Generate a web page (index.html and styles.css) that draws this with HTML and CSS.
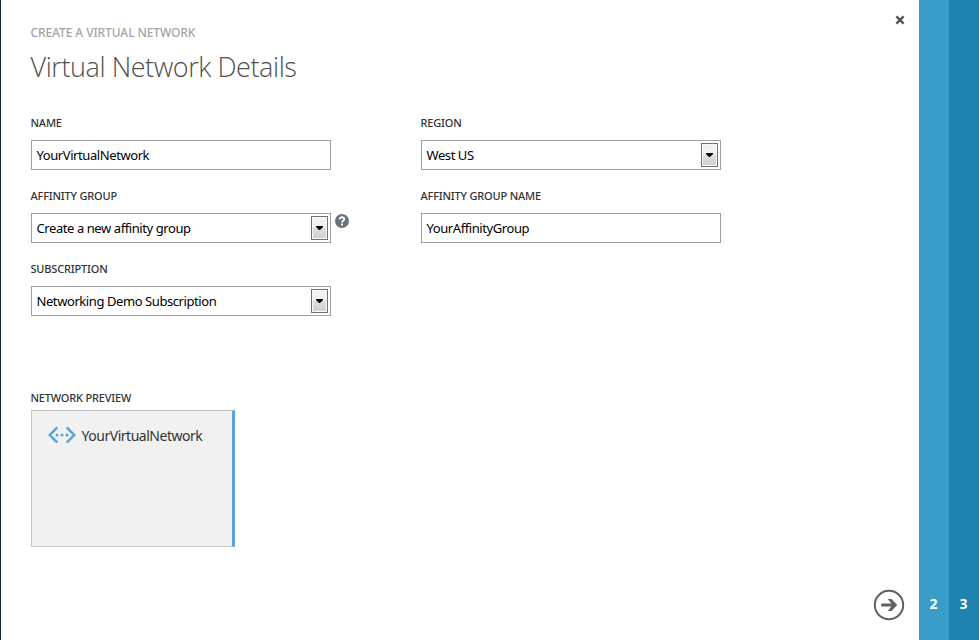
FILE: index.html
```html
<!DOCTYPE html>
<html lang="en">
<head>
<meta charset="utf-8">
<title>Create a Virtual Network</title>
<link rel="stylesheet" href="styles.css">
</head>
<body>
<div class="wizard">
  <main class="page">
    <button class="close" aria-label="Close"><svg width="10" height="10" viewBox="0 0 10 10"><path d="M1.4 1.4 8.6 8.6M8.6 1.4 1.4 8.6"/></svg></button>
    <p class="eyebrow">CREATE A VIRTUAL NETWORK</p>
    <h1 class="title">Virtual Network Details</h1>
    <div class="columns">
      <div class="column">
        <div class="field"><span class="label">NAME</span><div class="box"><span class="value">YourVirtualNetwork</span></div></div>
        <div class="field"><span class="label">AFFINITY GROUP</span>
          <div class="with-help">
            <div class="box"><span class="value">Create a new affinity group</span><span class="drop"><svg width="7" height="4" viewBox="0 0 7 4"><path d="M0 0H7V1L4 4H3L0 1Z"/></svg></span></div>
            <svg class="help" width="14" height="14" viewBox="0 0 14 14"><circle cx="7" cy="7" r="7"/><path d="M4.8 5.2C4.8 2.6 9.2 2.6 9.2 5.2C9.2 6.7 7 6.7 7 8.4M7 9.6V11.4"/></svg>
          </div>
        </div>
        <div class="field"><span class="label">SUBSCRIPTION</span><div class="box"><span class="value">Networking Demo Subscription</span><span class="drop"><svg width="7" height="4" viewBox="0 0 7 4"><path d="M0 0H7V1L4 4H3L0 1Z"/></svg></span></div></div>
      </div>
      <div class="column">
        <div class="field"><span class="label">REGION</span><div class="box"><span class="value">West US</span><span class="drop"><svg width="7" height="4" viewBox="0 0 7 4"><path d="M0 0H7V1L4 4H3L0 1Z"/></svg></span></div></div>
        <div class="field"><span class="label">AFFINITY GROUP NAME</span><div class="box"><span class="value">YourAffinityGroup</span></div></div>
      </div>
    </div>
    <section class="preview">
      <span class="label">NETWORK PREVIEW</span>
      <div class="card">
        <svg class="net" width="28" height="18" viewBox="0 0 28 18"><path d="M9.3 1.3 1.8 9 9.3 16.7M18.7 1.3 26.2 9 18.7 16.7"/><circle cx="9" cy="9" r="1.5"/><circle cx="14" cy="9" r="1.5"/><circle cx="19" cy="9" r="1.5"/></svg>
        <span class="net-name">YourVirtualNetwork</span>
      </div>
    </section>
    <button class="next" aria-label="Next"><svg width="32" height="32" viewBox="0 0 32 32"><circle cx="16" cy="16" r="14.2"/><path d="M8.2 14.4H18.4L14.7 10H18.6L24.2 16 18.6 22H14.7L18.4 17.6H8.2Z"/></svg></button>
  </main>
  <div class="step step-two">2</div>
  <div class="step step-three">3</div>
</div>
</body>
</html>
```
FILE: styles.css
```css
* { box-sizing: border-box; }
body { margin: 0; background: #fff; font-family: "Noto Sans", "Open Sans", sans-serif; }
button { border: 0; padding: 0; background: none; }
svg { display: block; }
.wizard { display: flex; height: 640px; width: 979px; overflow: hidden; }
.page { position: relative; flex: 1; padding: 23px 0 0 29.5px; border-left: 1px solid #142430; }
.eyebrow { margin: 0; font-size: 12px; line-height: 20px; font-weight: 500; letter-spacing: -0.09px; color: #a5a5a5; }
.title { margin: 4px 0 0; font-family: "Open Sans", sans-serif; font-size: 27px; line-height: 40px; font-weight: 300; letter-spacing: -0.43px; color: #505050; }
.columns { display: flex; gap: 90px; margin-top: 26px; height: 275px; }
.column { width: 300px; display: flex; flex-direction: column; gap: 16px; }
.field { display: flex; flex-direction: column; gap: 7px; }
.label { display: block; font-size: 11px; line-height: 20px; font-weight: 500; letter-spacing: -0.18px; color: #333; white-space: nowrap; }
.box { flex: none; display: flex; align-items: center; justify-content: space-between; width: 300px; height: 30px; padding: 0 2px 0 5px; border: 1px solid #a0a0a0; background: #fff; }
.value { font-size: 13px; line-height: 20px; letter-spacing: -0.42px; color: #000; white-space: nowrap; }
.drop { display: flex; align-items: center; justify-content: center; width: 17px; height: 24px; border: 1px solid #707070; box-shadow: inset 0 0 0 1px #fafafa; background: linear-gradient(#f2f2f2 0 45%, #dedede 50%, #cfcfcf); }
.drop path { fill: #000; }
.with-help { display: flex; width: 320px; gap: 4px; }
.help { margin-top: 1px; }
.help circle { fill: #6c7379; }
.help path { fill: none; stroke: #fff; stroke-width: 1.9; }
.card { display: flex; align-items: flex-start; gap: 6px; width: 204px; height: 137px; margin-top: 2px; padding: 15px 0 0 16px; background: #f1f1f1; border: 1px solid #c4c4c4; border-right: 3px solid #59a3d9; }
.net { flex: none; }
.net path { fill: none; stroke: #59a3d9; stroke-width: 2.5; }
.net circle { fill: #59a3d9; }
.net-name { font-size: 14px; line-height: 20px; letter-spacing: -0.48px; color: #333; }
.close { position: absolute; left: 894px; top: 15px; }
.close path { stroke: #555; stroke-width: 2.5; }
.next { position: absolute; left: 872px; top: 589px; }
.next circle { fill: none; stroke: #606060; stroke-width: 2; }
.next path { fill: #606060; }
.step { flex: none; width: 30px; padding: 594px 1px 0 0; text-align: center; font-size: 14px; line-height: 20px; font-weight: 700; color: #fff; }
.step-two { background: #3a9dc9; }
.step-three { background: #1e81ae; }
```
